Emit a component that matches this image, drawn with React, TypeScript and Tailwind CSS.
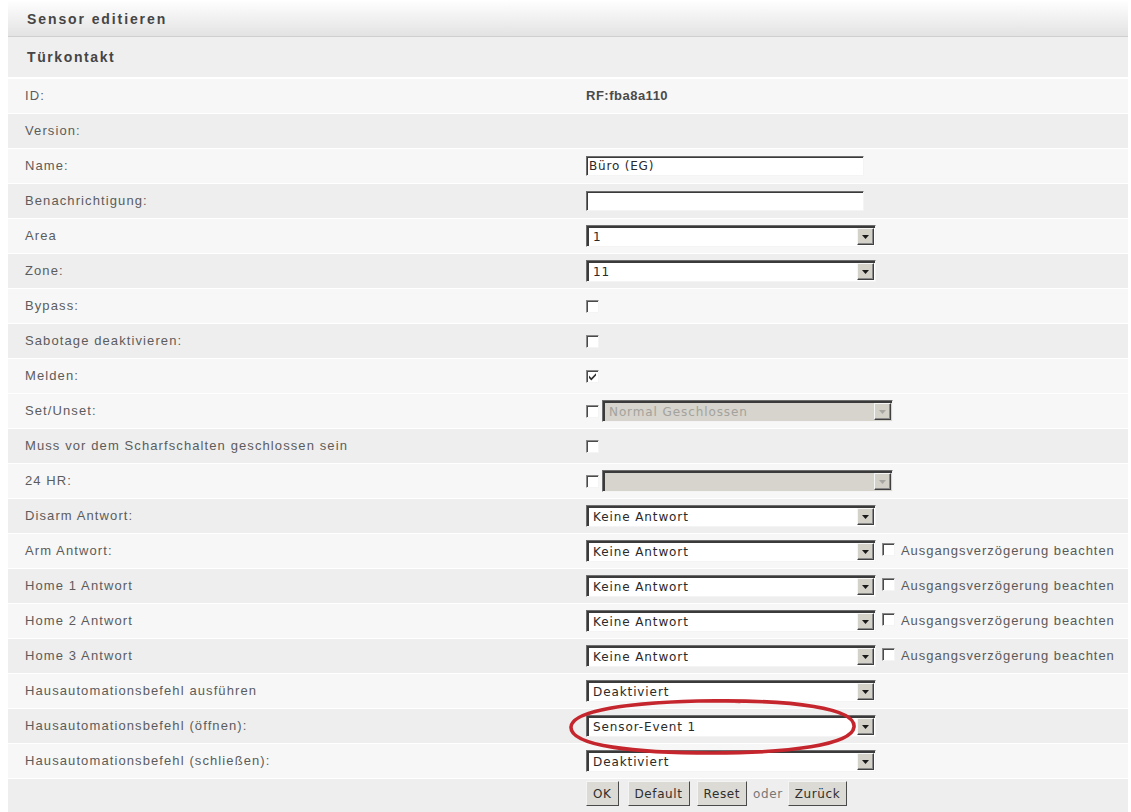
import React from "react";

type Row = {
  label: string;
  shade: "light" | "dark";
  kind: "text" | "empty" | "input" | "select" | "check" | "checkSelect" | "selectExtra";
  value?: string;
  checked?: boolean;
  ring?: boolean;
};

const rows: Row[] = [
  { label: "ID:", shade: "light", kind: "text", value: "RF:fba8a110" },
  { label: "Version:", shade: "dark", kind: "empty" },
  { label: "Name:", shade: "light", kind: "input", value: "Büro (EG)" },
  { label: "Benachrichtigung:", shade: "dark", kind: "input", value: "" },
  { label: "Area", shade: "light", kind: "select", value: "1" },
  { label: "Zone:", shade: "dark", kind: "select", value: "11" },
  { label: "Bypass:", shade: "light", kind: "check" },
  { label: "Sabotage deaktivieren:", shade: "dark", kind: "check" },
  { label: "Melden:", shade: "light", kind: "check", checked: true },
  { label: "Set/Unset:", shade: "light", kind: "checkSelect", value: "Normal Geschlossen" },
  { label: "Muss vor dem Scharfschalten geschlossen sein", shade: "dark", kind: "check" },
  { label: "24 HR:", shade: "light", kind: "checkSelect", value: "" },
  { label: "Disarm Antwort:", shade: "dark", kind: "select", value: "Keine Antwort" },
  { label: "Arm Antwort:", shade: "light", kind: "selectExtra", value: "Keine Antwort" },
  { label: "Home 1 Antwort", shade: "dark", kind: "selectExtra", value: "Keine Antwort" },
  { label: "Home 2 Antwort", shade: "light", kind: "selectExtra", value: "Keine Antwort" },
  { label: "Home 3 Antwort", shade: "dark", kind: "selectExtra", value: "Keine Antwort" },
  { label: "Hausautomationsbefehl ausführen", shade: "light", kind: "select", value: "Deaktiviert" },
  { label: "Hausautomationsbefehl (öffnen):", shade: "dark", kind: "select", value: "Sensor-Event 1", ring: true },
  { label: "Hausautomationsbefehl (schließen):", shade: "light", kind: "select", value: "Deaktiviert" },
];

const labelFont = { fontFamily: '"Liberation Sans", Arial, sans-serif' };
const ctrlFont = { fontFamily: '"DejaVu Sans", Verdana, sans-serif' };

function Checkbox({ checked = false }: { checked?: boolean }) {
  return (
    <span className="relative inline-block h-[13px] w-[13px] shrink-0 border border-t-[#8a8a8a] border-l-[#8a8a8a] border-b-[#f4f4f4] border-r-[#f4f4f4] bg-white shadow-[inset_1px_1px_0_#4a4a4a]">
      {checked && (
        <svg viewBox="0 0 11 11" className="absolute left-0 top-0 h-[11px] w-[11px]">
          <path d="M2 4.6 L4.3 7 L9 2.2 L9 4.6 L4.3 9.4 L2 7 Z" fill="#2e2e2e" />
        </svg>
      )}
    </span>
  );
}

function Arrow({ disabled = false }: { disabled?: boolean }) {
  return (
    <span className="flex h-full w-[17px] shrink-0 items-center justify-center border border-t-[#f6f6f6] border-l-[#f6f6f6] border-b-[#404040] border-r-[#404040] bg-[#d4d1c9] shadow-[inset_-1px_-1px_0_#8a8a8a]">
      <svg viewBox="0 0 7 4" className="h-[4px] w-[7px]">
        <path d="M0 0 H7 L3.5 4 Z" fill={disabled ? "#a8a6a0" : "#1a1a1a"} />
      </svg>
    </span>
  );
}

function Select({ value, disabled = false, wide = false }: { value: string; disabled?: boolean; wide?: boolean }) {
  return (
    <span
      className={`flex h-[22px] shrink-0 items-stretch border border-t-[#6e6e6e] border-l-[#6e6e6e] border-b-[#f4f4f4] border-r-[#f4f4f4] pt-[2px] pl-[2px] pr-px pb-px shadow-[inset_2px_2px_0_#3a3a3a] ${
        wide ? "w-[291px]" : "w-[290px]"
      } ${disabled ? "bg-[#d6d4cc]" : "bg-white"}`}
      style={ctrlFont}
    >
      <span
        className={`flex flex-1 items-center pl-[4px] text-[12px] tracking-[0.9px] ${
          disabled ? "text-[#a3a29d]" : "text-[#2a2a2a]"
        }`}
      >
        {value}
      </span>
      <Arrow disabled={disabled} />
    </span>
  );
}

function TextInput({ value }: { value: string }) {
  return (
    <span
      className="flex h-[20px] w-[278px] items-center border border-t-[#6e6e6e] border-l-[#6e6e6e] border-b-[#f4f4f4] border-r-[#f4f4f4] bg-white pl-[2px] text-[12px] tracking-[0.8px] text-[#2a2a2a] shadow-[inset_1px_1px_0_#3a3a3a]"
      style={ctrlFont}
    >
      {value}
    </span>
  );
}

function Button({ children }: { children: React.ReactNode }) {
  return (
    <span
      className="flex h-[25px] items-center border border-t-[#f4f4f4] border-l-[#f4f4f4] border-b-[#4a4a4a] border-r-[#4a4a4a] bg-[#dcdad4] px-[6px] text-[12px] tracking-[0.6px] text-[#2e2e2e]"
      style={ctrlFont}
    >
      {children}
    </span>
  );
}

function Control({ row }: { row: Row }) {
  switch (row.kind) {
    case "text":
      return (
        <span className="text-[13px] font-bold tracking-[0.5px] text-[#4a4a4a]" style={labelFont}>
          {row.value}
        </span>
      );
    case "input":
      return <TextInput value={row.value ?? ""} />;
    case "select":
      return <Select value={row.value ?? ""} />;
    case "check":
      return <Checkbox checked={row.checked} />;
    case "checkSelect":
      return (
        <span className="flex items-center gap-[3px]">
          <Checkbox />
          <Select value={row.value ?? ""} disabled wide />
        </span>
      );
    case "selectExtra":
      return (
        <span className="flex items-center">
          <Select value={row.value ?? ""} />
          <span className="ml-[6px]">
            <Checkbox />
          </span>
          <span className="ml-[6px] text-[13px] tracking-[0.95px] text-[#5a5a5a]" style={labelFont}>
            Ausgangsverzögerung beachten
          </span>
        </span>
      );
    default:
      return null;
  }
}

export default function App() {
  return (
    <div className="min-h-[812px] w-[1131px] overflow-hidden bg-white" style={labelFont}>
      <div className="ml-[8px] w-[1120px]">
        {/* panel title */}
        <div className="flex h-[37px] items-center border-b border-[#cfcfcf] bg-gradient-to-b from-[#ffffff] to-[#e3e3e3] pl-[19px] pt-[2px]">
          <span className="text-[14px] font-bold tracking-[1.9px] text-[#454545]">Sensor editieren</span>
        </div>
        {/* sensor type */}
        <div className="flex h-[42px] items-center border-b-2 border-white bg-[#efefef] pl-[19px]">
          <span className="text-[14px] font-bold tracking-[1.6px] text-[#454545]">Türkontakt</span>
        </div>

        {rows.map((row) => (
          <div
            key={row.label}
            className={`relative flex h-[35px] items-center border-b border-white ${
              row.shade === "light" ? "bg-[#f7f7f7]" : "bg-[#eeeeee]"
            }`}
          >
            <div className="w-[578px] shrink-0 pl-[17px] text-[13px] tracking-[1.1px] text-[#5c5c5c]">
              {row.label}
            </div>
            <div className="flex flex-1 items-center">
              <Control row={row} />
            </div>
            {row.ring && (
              <svg
                className="pointer-events-none absolute left-[554px] top-[-13px] z-10 h-[62px] w-[302px]"
                viewBox="0 0 302 62"
              >
                <path
                  d="M150 5 C230 4 294 12 292 31 C290 49 226 57 150 57 C74 57 8 50 9 31 C10 14 66 7 136 5 C150 4.6 165 4.6 178 5.4"
                  fill="none"
                  stroke="#c5262d"
                  strokeWidth="3.6"
                  strokeLinecap="round"
                />
              </svg>
            )}
          </div>
        ))}

        {/* form actions */}
        <div className="flex h-[40px] items-start bg-[#eeeeee] pt-[2px]">
          <div className="w-[578px] shrink-0" />
          <div className="flex items-center">
            <Button>OK</Button>
            <span className="ml-[9px]">
              <Button>Default</Button>
            </span>
            <span className="ml-[7px]">
              <Button>Reset</Button>
            </span>
            <span className="ml-[6px] mr-[5px] text-[12px] tracking-[0.6px] text-[#777]" style={ctrlFont}>
              oder
            </span>
            <Button>Zurück</Button>
          </div>
        </div>
      </div>
    </div>
  );
}
